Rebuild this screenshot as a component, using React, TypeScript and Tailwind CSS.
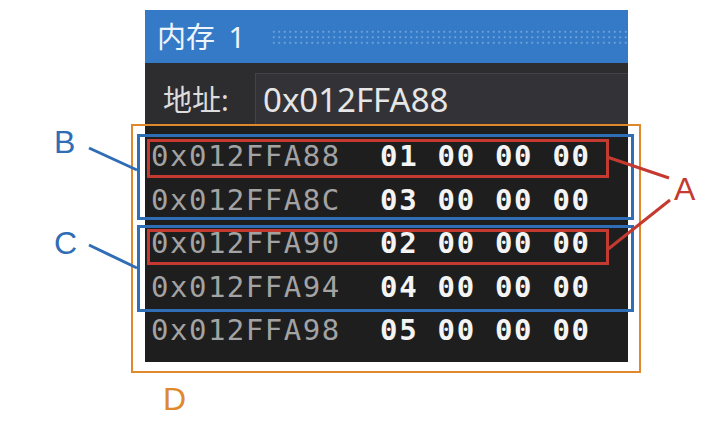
import React from "react";

const rows = [
  { addr: "0x012FFA88", val: "01 00 00 00" },
  { addr: "0x012FFA8C", val: "03 00 00 00" },
  { addr: "0x012FFA90", val: "02 00 00 00" },
  { addr: "0x012FFA94", val: "04 00 00 00" },
  { addr: "0x012FFA98", val: "05 00 00 00" },
];

export default function App() {
  return (
    <div className="relative w-[725px] h-[434px] bg-white overflow-hidden" style={{ fontFamily: '"Noto Sans", "Noto Sans CJK SC", sans-serif' }}>
      <div className="ml-[145px] pt-[10px] w-[483px] flex flex-col">
        <div className="h-[53px] bg-[#347ac7] flex items-center pl-[12px]">
          <span className="text-[29px] leading-none text-[#eef4fb] font-['Noto_Sans','Noto_Sans_CJK_SC',sans-serif] whitespace-pre">内存 <span className="ml-[6px]">1</span></span>
          <div className="ml-[26px] mt-[2px] flex-1 h-[17px] bg-[radial-gradient(circle,#6fa3dc_0.8px,transparent_1.2px)] bg-[length:5.5px_5.5px]" />
        </div>
        <div className="h-[62px] bg-[#2d2d30] flex">
          <div className="w-[110px] flex items-center pl-[18px] pt-[10px]">
            <span className="text-[29px] leading-none text-[#dcdcdc] font-['Noto_Sans','Noto_Sans_CJK_SC',sans-serif]">地址:</span>
          </div>
          <div className="mt-[10px] flex-1 bg-[#333337] border-l border-t border-[#434346] flex items-center pl-[7px]">
            <span className="text-[33px] leading-none text-[#e6e6e6] font-['Noto_Sans',sans-serif]">0x012FFA88</span>
          </div>
        </div>
        <div className="h-[237px] bg-[#1e1e1e] pt-[10px] flex flex-col font-['DejaVu_Sans_Mono',monospace]">
          {rows.map((r) => (
            <div key={r.addr} className="h-[43.5px] flex items-center pl-[6px]">
              <span className="w-[229px] text-[29px] leading-none text-[#a3a3a3] tracking-[1.5px]">{r.addr}</span>
              <span className="text-[29px] leading-none text-[#f4f4f4] font-bold tracking-[1.7px]">{r.val}</span>
            </div>
          ))}
        </div>
      </div>

      {/* annotation boxes */}
      <div className="absolute left-[131px] top-[124px] w-[510px] h-[249px] border-[2.5px] border-[#e0882c]" />
      <div className="absolute left-[137px] top-[134px] w-[497px] h-[86px] border-[3px] border-[#2f6db5]" />
      <div className="absolute left-[137px] top-[225px] w-[497px] h-[87px] border-[3px] border-[#2f6db5]" />
      <div className="absolute left-[147px] top-[139px] w-[462px] h-[39px] border-[3px] border-[#c43a30]" />
      <div className="absolute left-[147px] top-[229px] w-[462px] h-[36px] border-[3px] border-[#c43a30]" />

      <svg className="absolute left-0 top-0" width="725" height="434">
        <line x1="89" y1="148" x2="137" y2="170" stroke="#2f6db5" strokeWidth="3" />
        <line x1="89" y1="245" x2="137" y2="268" stroke="#2f6db5" strokeWidth="3" />
        <line x1="607" y1="157" x2="669" y2="178" stroke="#c43a30" strokeWidth="3" />
        <line x1="670" y1="200" x2="607" y2="250" stroke="#c43a30" strokeWidth="3" />
      </svg>

      <span className="absolute left-[54px] top-[126px] text-[32px] leading-none text-[#2f6db5] font-['Liberation_Sans',sans-serif]">B</span>
      <span className="absolute left-[54px] top-[227px] text-[32px] leading-none text-[#2f6db5] font-['Liberation_Sans',sans-serif]">C</span>
      <span className="absolute left-[674px] top-[173px] text-[32px] leading-none text-[#c43a30] font-['Liberation_Sans',sans-serif]">A</span>
      <span className="absolute left-[163px] top-[383px] text-[32px] leading-none text-[#e0882c] font-['Liberation_Sans',sans-serif]">D</span>
    </div>
  );
}
